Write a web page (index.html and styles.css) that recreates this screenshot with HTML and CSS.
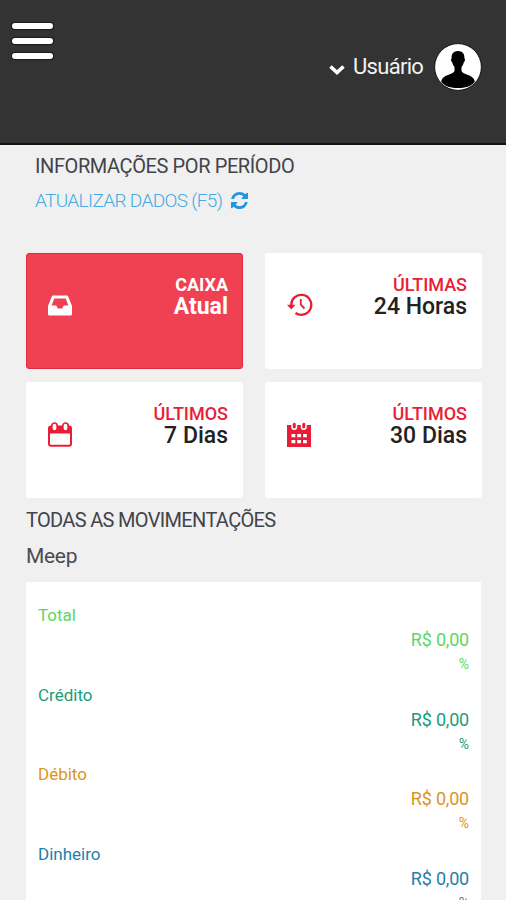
FILE: index.html
```html
<!DOCTYPE html>
<html lang="pt-br">
<head>
    <meta charset="utf-8">
    <title>Meep</title>
    <link rel="stylesheet" href="styles.css">
</head>
<body>
    <header class="header">
        <div class="menu-btn">
            <span></span>
            <span></span>
            <span></span>
        </div>
        <div class="user">
            <svg class="chevron" viewBox="0 0 16 12"><path d="M1.500 2.500l6.500 6 6.500-6" fill="none" stroke="#fff" stroke-width="3.600"/></svg>
            <span class="user-name">Usuário</span>
            <svg class="avatar" viewBox="0 0 48 48">
                <circle cx="24" cy="24" r="23.400" fill="#fff" stroke="#111" stroke-width="1"/>
                <path d="M24 8c-4.600 0-6.600 3-6.400 7.300-1 .4-.7 3.500.7 4.200.4 2 1.200 3.400 2.200 4.500v4c-1 3-9 3.500-12 7.500-.9 1.300-1.200 2.500-1.200 3.500C11 43.500 17 45 24 45s13-1.500 16.700-6c0-1-.3-2.200-1.200-3.500-3-4-11-4.500-12-7.500v-4c1-1.100 1.800-2.500 2.200-4.500 1.400-.7 1.700-3.800.7-4.200C30.600 11 28.600 8 24 8z" fill="#000"/>
            </svg>
        </div>
    </header>

    <div class="period">
        <h1 class="title period-title">INFORMAÇÕES POR PERÍODO</h1>
        <a class="refresh">
            <span class="refresh-text">ATUALIZAR DADOS (F5)</span>
            <svg class="refresh-icon" viewBox="0 0 1536 1536"><path fill="#2196dc" d="M1511 928q0 5-1 7-64 268-268 434.500T764 1536q-146 0-282.500-55T238 1324l-129 129q-19 19-45 19t-45-19-19-45V960q0-26 19-45t45-19h448q26 0 45 19t19 45-19 45l-137 137q71 66 161 102t187 36q134 0 250-65t186-179q11-17 53-117 8-23 30-23h192q13 0 22.500 9.500t9.500 22.500zm25-800v448q0 26-19 45t-45 19h-448q-26 0-45-19t-19-45 19-45l138-138Q969 256 768 256q-134 0-250 65T332 500q-11 17-53 117-8 23-30 23H50q-13 0-22.500-9.500T18 608v-7q65-268 270-434.500T768 0q146 0 284 55.500T1297 212l130-129q19-19 45-19t45 19 19 45z"/></svg>
        </a>
    </div>

    <div class="cards">
        <div class="card card-active">
            <svg class="card-icon" viewBox="0 0 24 24"><path fill="#fff" fill-rule="evenodd" d="M5.200 2h13.600q1 0 1.400 1L24 12.500v8q0 1.500-1.500 1.500h-21Q0 22 0 20.500v-8L3.800 3q.4-1 1.400-1zM6.300 5L3.600 12h4.600l1.600 3h4.400l1.600-3h4.600L17.700 5z"/></svg>
            <div class="card-text">
                <div class="card-label">CAIXA</div>
                <div class="card-value">Atual</div>
            </div>
        </div>
        <div class="card">
            <svg class="card-icon history" viewBox="0 0 26 24" fill="none" stroke="#ea1d36" stroke-width="2.300">
                <path d="M4.300 13A10 10 0 1 1 8.500 20.500"/>
                <path d="M0 12.300h8.600L4.300 17z" fill="#ea1d36" stroke="none"/>
                <path d="M13.800 6.500v5.700l3.700 3.800" stroke-width="1.800"/>
            </svg>
            <div class="card-text">
                <div class="card-label">ÚLTIMAS</div>
                <div class="card-value">24 Horas</div>
            </div>
        </div>
        <div class="card">
            <svg class="card-icon" viewBox="0 0 24 25">
                <rect x="1" y="4.500" width="22" height="19.300" rx="2" fill="none" stroke="#ea1d36" stroke-width="2"/>
                <path d="M1 4.500h22V11.500H1z" fill="#ea1d36"/>
                <g fill="#fff" stroke="#ea1d36" stroke-width="1.700">
                    <rect x="3.800" y="1" width="5.400" height="8" rx="2.700"/>
                    <rect x="14.800" y="1" width="5.400" height="8" rx="2.700"/>
                </g>
            </svg>
            <div class="card-text">
                <div class="card-label">ÚLTIMOS</div>
                <div class="card-value">7 Dias</div>
            </div>
        </div>
        <div class="card">
            <svg class="card-icon" viewBox="0 0 24 25">
                <path d="M0 3h24v22H0z" fill="#ea1d36"/>
                <g fill="#ea1d36" stroke="#fff" stroke-width="1.500">
                    <rect x="5" y="0" width="4.500" height="7.200" rx="2.200"/>
                    <rect x="14.500" y="0" width="4.500" height="7.200" rx="2.200"/>
                </g>
                <path fill="#fff" d="M4.500 12h3.800v3.300H4.500zM10.200 12H14v3.300h-3.800zM16 12h3.800v3.300H16zM4.500 18h3.800v3.300H4.500zM10.200 18H14v3.300h-3.800zM16 18h3.800v3.300H16z"/>
            </svg>
            <div class="card-text">
                <div class="card-label">ÚLTIMOS</div>
                <div class="card-value">30 Dias</div>
            </div>
        </div>
    </div>

    <div class="movements">
        <h2 class="title movements-title">TODAS AS MOVIMENTAÇÕES</h2>
        <div class="company">Meep</div>
        <div class="panel">
            <div class="row total">
                <div class="row-name">Total</div>
                <div class="row-value">R$ 0,00</div>
                <div class="row-percent">%</div>
            </div>
            <div class="row credit">
                <div class="row-name">Crédito</div>
                <div class="row-value">R$ 0,00</div>
                <div class="row-percent">%</div>
            </div>
            <div class="row debit">
                <div class="row-name">Débito</div>
                <div class="row-value">R$ 0,00</div>
                <div class="row-percent">%</div>
            </div>
            <div class="row cash">
                <div class="row-name">Dinheiro</div>
                <div class="row-value">R$ 0,00</div>
                <div class="row-percent">%</div>
            </div>
        </div>
    </div>
</body>
</html>
```

FILE: styles.css
```css
* {
    box-sizing: border-box;
}
body {
    margin: 0;
    height: 900px;
    overflow: hidden;
    background: #f0f0f0;
    font-family: Roboto, "Liberation Sans", sans-serif;
}
.header {
    display: flex;
    justify-content: space-between;
    align-items: flex-start;
    height: 145px;
    padding: 23px 24px 0 12px;
    background: #333;
    border-bottom: 2px solid #111;
}
.menu-btn {
    display: flex;
    flex-direction: column;
    gap: 9px;
}
.menu-btn span {
    width: 41px;
    height: 6px;
    background: #fff;
    border-radius: 3px;
    box-shadow: 0 0 1px 1px #1a1a1a;
}
.user {
    display: flex;
    align-items: center;
    margin-top: 20px;
}
.chevron {
    width: 16px;
    height: 12px;
    margin: 5px 8px 0 0;
}
.user-name {
    width: 71px;
    font-size: 22px;
    line-height: 26px;
    letter-spacing: -0.7px;
    color: #f2f2f2;
    white-space: nowrap;
}
.avatar {
    width: 48px;
    height: 48px;
    margin-left: 10px;
}
.title {
    margin: 0;
    font-size: 20px;
    font-weight: 400;
    line-height: 24px;
    color: #43434b;
    white-space: nowrap;
}
.period {
    padding: 9px 0 0 35px;
}
.period-title {
    letter-spacing: -0.4px;
}
.refresh {
    display: flex;
    align-items: center;
    gap: 9px;
    margin-top: 11px;
    line-height: 24px;
}
.refresh-text {
    font-size: 19px;
    font-weight: 300;
    letter-spacing: -0.65px;
    color: #46a9e2;
}
.refresh-icon {
    width: 17px;
    height: 17px;
    margin-top: -2px;
}
.cards {
    display: grid;
    grid-template-columns: 217px 217px;
    gap: 13px 22px;
    padding: 40px 0 0 26px;
}
.card {
    display: flex;
    justify-content: space-between;
    height: 116px;
    padding: 21px 15px 0 22px;
    background: #fff;
    border-radius: 3px;
}
.card-active {
    background: #f04152;
    border: 1px solid #e02b40;
    padding: 20px 14px 0 21px;
}
.card-icon {
    width: 24px;
    height: 25px;
    margin-top: 19px;
}
.history {
    width: 26px;
    margin-top: 18px;
}
.card-text {
    text-align: right;
}
.card-label {
    font-size: 18px;
    font-weight: 500;
    line-height: 21px;
    color: #ea1d36;
}
.card-value {
    font-size: 23px;
    font-weight: 500;
    line-height: 23px;
    color: #222;
}
.card-active .card-label,
.card-active .card-value {
    color: #fff;
    font-weight: 700;
}
.movements {
    padding: 10px 25px 0 26px;
}
.movements-title {
    letter-spacing: -0.67px;
}
.company {
    margin-top: 11px;
    font-size: 21px;
    line-height: 26px;
    letter-spacing: -0.3px;
    color: #4b4b50;
}
.panel {
    height: 340px;
    margin-top: 13px;
    padding: 21px 12px 0;
    background: #fff;
}
.row {
    height: 79.7px;
}
.row-name {
    font-size: 17px;
    line-height: 24px;
}
.row-value {
    padding-top: 1px;
    font-size: 18px;
    line-height: 24px;
    letter-spacing: -0.2px;
    text-align: right;
}
.row-percent {
    font-size: 14px;
    line-height: 24px;
    text-align: right;
}
.total { color: #5bd765; }
.credit { color: #1b9d78; }
.debit { color: #dc9522; }
.cash { color: #237fa8; }
```
